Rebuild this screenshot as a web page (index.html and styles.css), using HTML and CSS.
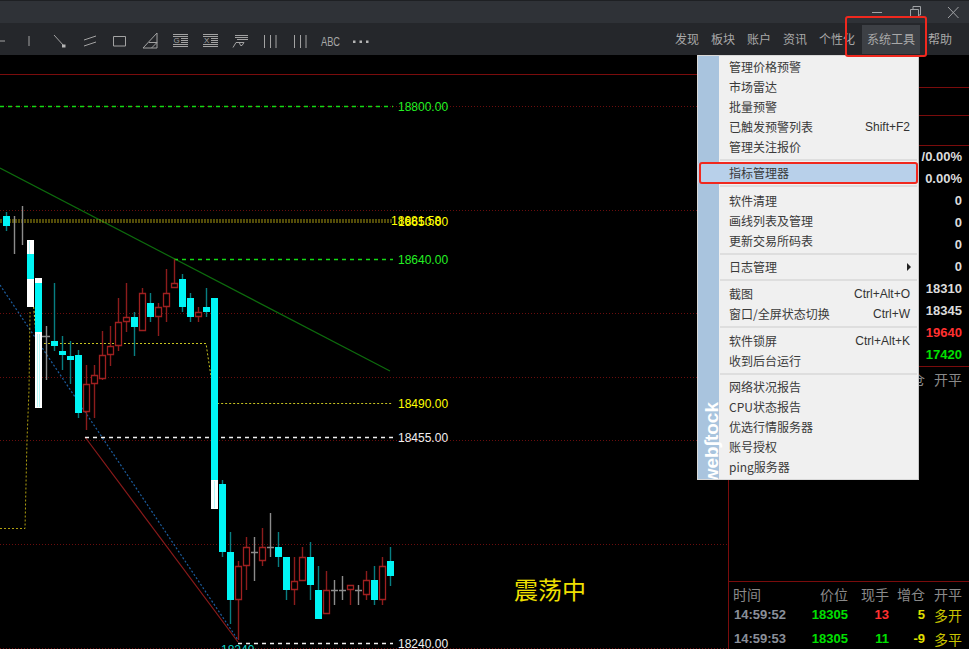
FILE: index.html
```html
<!DOCTYPE html>
<html lang="zh">
<head>
<meta charset="utf-8">
<title>webstock</title>
<link rel="stylesheet" href="styles.css">
</head>
<body>
<div class="app">
  <header class="titlebar">
    <svg class="win" viewBox="0 0 114 23" width="114" height="23">
      <path class="win-line" d="M17 12.500H27"/>
      <path class="win-line" d="M55.500 9.500H63.500V17.500H55.500ZM58 9V6.500H65.500V15H64"/>
      <path class="win-line" d="M93 7L103.500 18M103.500 7L93 18"/>
    </svg>
  </header>
  <nav class="toolbar">
    <div class="tools">
      <svg class="tool" viewBox="0 0 30 32"><path d="M8 18H21"/></svg>
      <svg class="tool" viewBox="0 0 30 32"><path d="M15 13V23"/></svg>
      <svg class="tool" viewBox="0 0 30 32"><path d="M10 12L20 23"/><path class="solid" d="M18 21.500h3.500v3h-3.500z"/></svg>
      <svg class="tool" viewBox="0 0 30 32"><path d="M10 17L22 13M10 23L22 19"/></svg>
      <svg class="tool" viewBox="0 0 30 32"><path d="M9.500 13.500H21.500V23H9.500Z"/></svg>
      <svg class="tool" viewBox="0 0 30 32"><path d="M9 25L23 10V25ZM15 19.500H23M17.500 25L23 19.500"/></svg>
      <svg class="tool" viewBox="0 0 30 32"><path d="M9 11.500H24M9 13.500H24M17 15.500H24M17 17.500H24M17 19.500H24M9 21.500H24M9 23.500H24"/><text class="tool-letter" x="9.500" y="20">G</text></svg>
      <svg class="tool" viewBox="0 0 30 32"><path d="M9 11.500H24M9 13.500H24M17 15.500H24M17 17.500H24M17 19.500H24M9 21.500H24M9 23.500H24"/><text class="tool-letter" x="10" y="20">X</text></svg>
      <svg class="tool" viewBox="0 0 30 32"><path d="M11 12.500H24M11 14.500H24M13 16.500H24"/><path d="M9 24.500L12 19.500H20L18 22.500H16.500L15.500 20"/></svg>
      <svg class="tool" viewBox="0 0 30 32"><path d="M10.500 12V25M16.500 12V25M22 12V25"/></svg>
      <svg class="tool" viewBox="0 0 30 32"><path d="M10.500 12V25M16.500 12V25M22 12V25"/></svg>
      <svg class="tool" viewBox="0 0 30 32"><text class="tool-abc" x="7" y="22.500" textLength="19" lengthAdjust="spacingAndGlyphs">ABC</text></svg>
      <svg class="tool" viewBox="0 0 30 32"><path class="solid" d="M9 17.500h2.500v2.500h-2.500zM15.500 17.500h2.500v2.500h-2.500zM22 17.500h2.500v2.500h-2.500z"/></svg>
    </div>
    <div class="links">
      <a class="link">发现</a>
      <a class="link">板块</a>
      <a class="link">账户</a>
      <a class="link">资讯</a>
      <a class="link">个性化</a>
      <a class="link link-active">系统工具</a>
      <a class="link">帮助</a>
    </div>
  </nav>
  <main class="main">
    <svg class="chart" viewBox="0 55 728 594" width="728" height="594">
      <g class="grid">
        <path d="M0 106.500H728M0 210.500H728M0 313.500H728M0 377.500H728M0 440.500H728M0 544.500H728M0 648.500H728"/>
      </g>
      <path class="frame" d="M0 74.500H728"/>

      <path class="trend-green" d="M0 168L390 371"/>
      <path class="trend-red" d="M85 437L238 642"/>
      <path class="trend-blue" d="M0 285L238 640"/>

      <path class="lvl-green" d="M0 106.500H393M174 259.500H393"/>
      <path class="lvl-yellow" d="M0 220H393M0 222H393"/>
      <path class="lvl-yellow-thin" d="M40 343.500H206L210 370L216 403.500H393"/>
      <path class="lvl-olive" d="M0 528.500H25L27 440L29 390L30 312"/>
      <path class="lvl-lime" d="M31 275L36 335L40 343"/>
      <path class="lvl-white" d="M85 437.500H393M238 643.500H393"/>

      <path class="wick-teal" d="M6.500 212V231M54.500 283V351M62.500 336V370M70.500 341V384M78.500 350V418M134.500 312V356M150.500 293V322M182.500 274V312M190.500 293V322M206.500 288V317M222.500 480V557M230.500 532V624M278.500 532V567M286.500 557V600M310.500 542V600M318.500 566V619M374.500 566V605M390.500 547V586"/>
      <path class="wick-red" d="M86.500 365V430M94.500 365V418M102.500 331V380M110.500 326V366M118.500 298V351M126.500 283V332M142.500 288V331M158.500 303V336M166.500 269V322M174.500 259V288M198.500 307V322M238.500 561V640M246.500 537V590M262.500 528V566M294.500 557V605M302.500 547V581M326.500 571V614M350.500 590V605M366.500 571V600M382.500 557V605"/>
      <path class="wick-gray" d="M14.500 216V254M22.500 206V245M46.500 326V380M42 336.500H50M254.500 537V581M251 552.500H258M270.500 513V557M267 547.500H274M334.500 580V605M331 590.500H338M342.500 576V600M339 590.500H346M358.500 585V605M355 590.500H362"/>

      <path class="body-white" d="M27 240h7v67h-7zM35 278h7v130h-7zM211 480h7v29h-7z"/>
      <path class="body-pale" d="M29 241h1v13h-1zM37 334h1v73h-1zM39 334h1v73h-1zM214 481h1v27h-1z"/>
      <path class="body-cyan" d="M3 216h7v10h-7zM27 254h7v25h-7zM35 283h7v49h-7zM51 341h7v5h-7zM59 351h7v4h-7zM67 356h7v4h-7zM75 355h7v58h-7zM131 317h7v10h-7zM147 303h7v14h-7zM179 279h7v28h-7zM187 298h7v19h-7zM203 307h7v5h-7zM211 298h7v182h-7zM219 484h7v68h-7zM227 552h7v48h-7zM275 547h7v10h-7zM283 557h7v33h-7zM307 557h7v28h-7zM315 590h7v29h-7zM371 580h7v20h-7zM387 561h7v15h-7z"/>
      <path class="body-hollow" d="M83.500 384.500h6v27h-6zM91.500 375.500h6v8h-6zM99.500 355.500h6v23h-6zM107.500 346.500h6v8h-6zM115.500 322.500h6v23h-6zM123.500 317.500h6v4h-6zM139.500 293.500h6v37h-6zM155.500 307.500h6v9h-6zM163.500 293.500h6v13h-6zM171.500 283.500h6v4h-6zM195.500 312.500h6v4h-6zM235.500 566.500h6v33h-6zM243.500 547.500h6v18h-6zM259.500 547.500h6v13h-6zM291.500 581.500h6v8h-6zM299.500 557.500h6v23h-6zM323.500 590.500h6v23h-6zM347.500 585.500h6v4h-6zM363.500 580.500h6v14h-6zM379.500 566.500h6v33h-6z"/>

      <text class="label label-green" x="398" y="111">18800.00</text>
      <text class="label label-green" x="398" y="264">18640.00</text>
      <text class="label label-yellow" x="391" y="225">18681.58</text>
      <text class="label label-yellow" x="398" y="226">18650.00</text>
      <text class="label label-yellow" x="398" y="408">18490.00</text>
      <text class="label label-white" x="398" y="442">18455.00</text>
      <text class="label label-white" x="398" y="648">18240.00</text>
      <text class="label label-cyan" x="221" y="654">18240</text>
      <text class="status" x="514" y="599">震荡中</text>
    </svg>

    <aside class="side">
      <div class="side-gap"></div>
      <div class="side-head"></div>
      <div class="side-sub"></div>
      <div class="stats">
        <div class="stat">/0.00%</div>
        <div class="stat">0.00%</div>
        <div class="stat">0</div>
        <div class="stat">0</div>
        <div class="stat">0</div>
        <div class="stat">0</div>
        <div class="stat">18310</div>
        <div class="stat">18345</div>
        <div class="stat stat-red">19640</div>
        <div class="stat stat-green">17420</div>
      </div>
      <div class="trade trade-head trade-head-upper">
        <span>时间</span><span>价位</span><span>现手</span><span>增仓</span><span>开平</span>
      </div>
      <div class="side-fill"></div>
      <div class="tape">
        <div class="trade trade-head">
          <span>时间</span><span>价位</span><span>现手</span><span>增仓</span><span>开平</span>
        </div>
        <div class="trade">
          <span class="t-time">14:59:52</span><span class="t-green">18305</span><span class="t-red">13</span><span class="t-yellow">5</span><span class="t-type">多开</span>
        </div>
        <div class="trade">
          <span class="t-time">14:59:53</span><span class="t-green">18305</span><span class="t-green">11</span><span class="t-yellow">-9</span><span class="t-type">多平</span>
        </div>
      </div>
    </aside>
  </main>

  <div class="menu">
    <div class="menu-item"><span>管理价格预警</span></div>
    <div class="menu-item"><span>市场雷达</span></div>
    <div class="menu-item"><span>批量预警</span></div>
    <div class="menu-item"><span>已触发预警列表</span><span class="key">Shift+F2</span></div>
    <div class="menu-item"><span>管理关注报价</span></div>
    <div class="sep"></div>
    <div class="menu-item menu-item-on"><span>指标管理器</span></div>
    <div class="sep sep-8"></div>
    <div class="menu-item"><span>软件清理</span></div>
    <div class="menu-item"><span>画线列表及管理</span></div>
    <div class="menu-item"><span>更新交易所码表</span></div>
    <div class="sep"></div>
    <div class="menu-item"><span>日志管理</span><i class="arrow"></i></div>
    <div class="sep sep-7"></div>
    <div class="menu-item"><span>截图</span><span class="key">Ctrl+Alt+O</span></div>
    <div class="menu-item"><span>窗口/全屏状态切换</span><span class="key">Ctrl+W</span></div>
    <div class="sep sep-7"></div>
    <div class="menu-item"><span>软件锁屏</span><span class="key">Ctrl+Alt+K</span></div>
    <div class="menu-item"><span>收到后台运行</span></div>
    <div class="sep"></div>
    <div class="menu-item"><span>网络状况报告</span></div>
    <div class="menu-item"><span>CPU状态报告</span></div>
    <div class="menu-item"><span>优选行情服务器</span></div>
    <div class="menu-item"><span>账号授权</span></div>
    <div class="menu-item"><span>ping服务器</span></div>
    <div class="brand">web∫tock</div>
  </div>

  <div class="mark mark-top"></div>
  <div class="mark mark-item"></div>
</div>
</body>
</html>
```
FILE: styles.css
```css
* { box-sizing: border-box; }
html, body { margin: 0; padding: 0; background: #000; }
body { font-family: "Liberation Sans", "Noto Sans CJK SC", sans-serif; }

.app {
  position: relative;
  width: 969px;
  height: 649px;
  overflow: hidden;
  display: flex;
  flex-direction: column;
  background: #000;
}

/* title bar */
.titlebar {
  flex: 0 0 23px;
  display: flex;
  justify-content: flex-end;
  background: #2f3237;
  border-top: 1px solid #1e2023;
}
.win { display: block; margin-top: -1px; }
.win-line { fill: none; stroke: #a0a2a5; stroke-width: 1; }

/* toolbar */
.toolbar {
  flex: 0 0 32px;
  display: flex;
  justify-content: space-between;
  background: #25272b;
}
.tools { display: flex; margin-left: -16px; }
.tool { display: block; width: 30px; height: 32px; flex: none; }
.tool path { fill: none; stroke: #a3a3a3; stroke-width: 1; }
.tool .solid { fill: #b5b5b5; stroke: none; }
.tool-letter { font: 8px "Liberation Sans", sans-serif; fill: #a3a3a3; }
.tool-abc { font: 12px "Liberation Sans", sans-serif; fill: #a8a8a8; }

.links {
  display: flex;
  align-items: stretch;
  gap: 12px;
  padding: 2px 17px 1px 0;
  font-family: "Noto Sans CJK SC", sans-serif;
  font-size: 12px;
  color: #a9a9a9;
}
.link { display: flex; align-items: center; padding-bottom: 2px; }
.link-active {
  background: #3d4045;
  margin: 0 -4px 0 -5px;
  width: 58px;
  justify-content: center;
}

/* main */
.main { flex: 1; display: flex; min-height: 0; }
.chart { display: block; flex: none; }

.grid path { fill: none; stroke: #6a0d0d; stroke-width: 1; stroke-dasharray: 1 2; }
.frame { fill: none; stroke: #7a0c0c; stroke-width: 1; }
.trend-green { fill: none; stroke: #0d6b0d; stroke-width: 1.2; }
.trend-red { fill: none; stroke: #8a1a1a; stroke-width: 1.2; }
.trend-blue { fill: none; stroke: #1c5ea0; stroke-width: 1.2; stroke-dasharray: 2 2; }
.lvl-green { fill: none; stroke: #14d814; stroke-width: 1.5; stroke-dasharray: 4 4; }
.lvl-yellow { fill: none; stroke: #a89a10; stroke-width: 1; stroke-dasharray: 2 1; }
.lvl-yellow-thin { fill: none; stroke: #c8c420; stroke-width: 1; stroke-dasharray: 2 2; }
.lvl-olive { fill: none; stroke: #b0a010; stroke-width: 1; stroke-dasharray: 2 2; }
.lvl-lime { fill: none; stroke: #e0e040; stroke-width: 1; stroke-dasharray: 2 2; }
.lvl-white { fill: none; stroke: #f0f0f0; stroke-width: 1.5; stroke-dasharray: 4 4; }

.wick-teal { fill: none; stroke: #087e82; stroke-width: 1.4; }
.wick-red { fill: none; stroke: #8c1c1c; stroke-width: 1.4; }
.wick-gray { fill: none; stroke: #8c8c8c; stroke-width: 1.4; }
.body-cyan { fill: #00f5f5; }
.body-white { fill: #fff; }
.body-pale { fill: #b8f8f8; }
.body-hollow { fill: #000; stroke: #a02020; stroke-width: 1.3; }

.label { font: 12px "Liberation Sans", sans-serif; }
.label-green { fill: #24f024; }
.label-yellow { fill: #ffff00; }
.label-white { fill: #f0f0f0; }
.label-cyan { fill: #10d8c8; }
.status { font: 24px "Noto Sans CJK SC", serif; fill: #f0e000; }

/* right panel */
.side {
  flex: 1;
  min-width: 0;
  display: flex;
  flex-direction: column;
  border-left: 1px solid #7a0c0c;
}
.side-gap { flex: 0 0 33px; border-bottom: 1px solid #7a0c0c; }
.side-head { flex: 0 0 28px; border-bottom: 1px solid #7a0c0c; }
.side-sub { flex: 0 0 30px; border-bottom: 1px solid #7a0c0c; }
.stat {
  height: 22px;
  line-height: 22px;
  padding-right: 7px;
  text-align: right;
  font-size: 13px;
  font-weight: 700;
  color: #dcdcdc;
}
.stat-red { color: #ff3030; }
.stat-green { color: #00e000; }

.trade {
  display: grid;
  grid-template-columns: 60px 59px 41px 36px 37px;
  flex: none;
  height: 24px;
  line-height: 24px;
  font-size: 13px;
  font-weight: 700;
  text-align: right;
}
.trade-head-upper { border-top: 1px solid #7a0c0c; }
.trade-head {
  font-family: "Noto Sans CJK SC", sans-serif;
  font-size: 14px;
  font-weight: 400;
  color: #8a8a8a;
}
.trade-head span:first-child { text-align: left; padding-left: 4px; }
.side-fill { flex: 1 1 0; }
.tape { flex: 0 0 68px; min-height: 0; border-top: 1px solid #7a0c0c; }
.tape .trade-head { height: 21px; }
.t-time { color: #8a8f99; text-align: left; padding-left: 5px; font-size: 13px; white-space: nowrap; }
.t-green { color: #00e000; }
.t-red { color: #ff3030; }
.t-yellow { color: #e0e000; }
.t-type {
  color: #c8c400;
  font-family: "Noto Sans CJK SC", sans-serif;
  font-size: 14px;
  font-weight: 400;
}

/* dropdown */
.menu {
  position: absolute;
  left: 697px;
  top: 55px;
  width: 222px;
  height: 425px;
  padding: 1px 1px 0;
  overflow: hidden;
  border: 1px solid #d8d8d8;
  border-right-color: #c8c8c8;
  background: linear-gradient(90deg, #a9c4de 21px, #f0f0f0 21px);
  font-family: "Noto Sans CJK SC", sans-serif;
  font-size: 12px;
  color: #3a3a3a;
}
.menu-item {
  position: relative;
  height: 20px;
  line-height: 20px;
  margin-right: -1px;
  padding: 0 8px 0 30px;
  display: flex;
  align-items: center;
  justify-content: space-between;
}
.menu-item-on { background: #b8d0ea; margin-left: -1px; padding-left: 31px; }
.key { font-family: "Liberation Sans", sans-serif; font-size: 12px; color: #333; }
.arrow {
  width: 0;
  height: 0;
  margin-right: -1px;
  border-left: 4px solid #222;
  border-top: 4px solid transparent;
  border-bottom: 4px solid transparent;
}
.sep { height: 6px; margin-left: 21px; padding: 2px 0; }
.sep::before { content: ""; display: block; height: 2px; background: #dedede; }
.sep-7 { height: 7px; }
.sep-8 { height: 8px; }
.brand {
  position: absolute;
  left: 5px;
  bottom: -4px;
  writing-mode: vertical-rl;
  transform: rotate(180deg);
  font-family: "Liberation Sans", sans-serif;
  font-size: 19px;
  line-height: 17px;
  font-weight: 700;
  color: #fff;
  white-space: nowrap;
}

/* red annotations */
.mark {
  position: absolute;
  border: 2px solid #f0281e;
  border-radius: 3px;
  pointer-events: none;
}
.mark-top { left: 845px; top: 16px; width: 82px; height: 41px; }
.mark-item { left: 699px; top: 162px; width: 219px; height: 22px; }
```
